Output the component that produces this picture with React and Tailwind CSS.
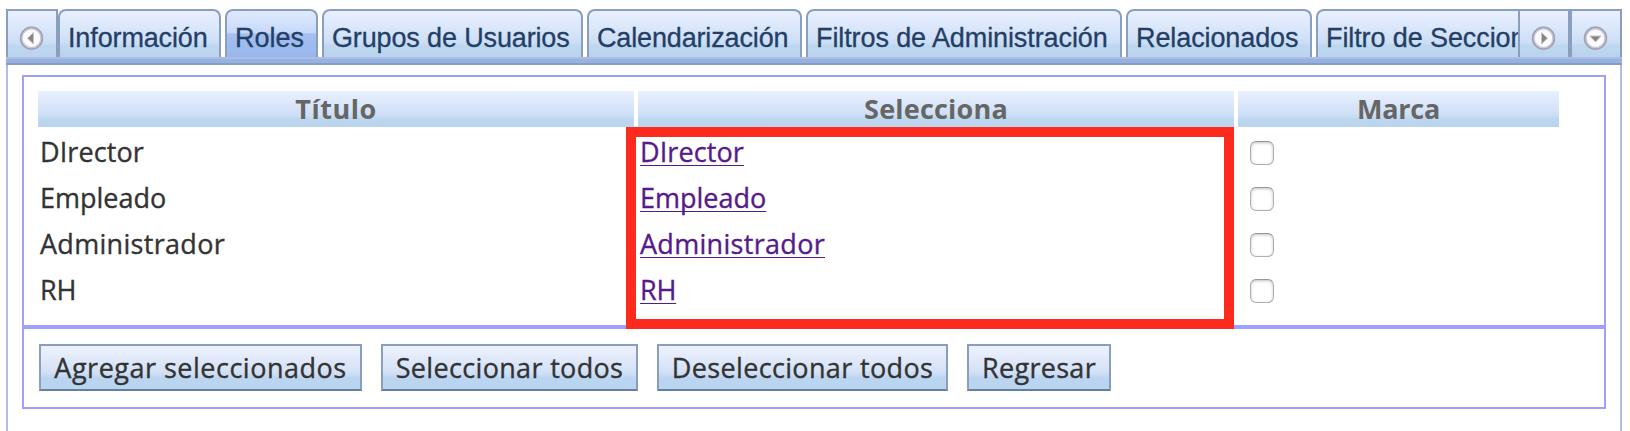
import React from 'react';

const tabs = [
  { label: 'Información', box: 'w-[163px] mr-[4px]', text: 'tracking-[-0.13px]' },
  { label: 'Roles', box: 'w-[93px] mr-[4px]', active: true, text: '' },
  { label: 'Grupos de Usuarios', box: 'w-[261px] mr-[4px]', text: 'tracking-[-0.14px]' },
  { label: 'Calendarización', box: 'w-[215px] mr-[4px]', text: 'tracking-[-0.15px]' },
  { label: 'Filtros de Administración', box: 'w-[316px] mr-[4px]', text: 'tracking-[-0.1px]' },
  { label: 'Relacionados', box: 'w-[186px] mr-[4px]', text: 'tracking-[-0.1px]' },
  { label: 'Filtro de Secciones', box: 'w-[260px]', text: 'tracking-[-0.1px]' },
];

const roles = [
  { name: 'DIrector', text: 'tracking-[0.1px]' },
  { name: 'Empleado', text: 'tracking-[0px]' },
  { name: 'Administrador', text: 'tracking-[0.3px]' },
  { name: 'RH', text: 'tracking-[-0.2px]' },
];

const actions = [
  { label: 'Agregar seleccionados', style: 'w-[323px] tracking-[0.5px]' },
  { label: 'Seleccionar todos', style: 'w-[257px] tracking-[0.33px]' },
  { label: 'Deseleccionar todos', style: 'w-[291px] tracking-[0.35px]' },
  { label: 'Regresar', style: 'w-[144px] tracking-[0.3px]' },
];

const panelGradient =
  'bg-[linear-gradient(180deg,#e9f0ff_0%,#d3e2f8_55%,#cbdef5_69%,#bfd8f0_75%,#b9d4ee_100%)]';
const activeGradient =
  'bg-[linear-gradient(180deg,#dfeafc_0%,#c7d9fa_47%,#a5c0f0_50%,#97b7ed_100%)]';

function ScrollButton({ direction }) {
  const points = {
    left: '15.5,8.5 15.5,20 9.5,14.2',
    right: '11.5,8.5 11.5,20 17.5,14.2',
    down: '7.8,12 19.2,12 13.5,18',
  };
  return (
    <button
      type="button"
      aria-label={direction}
      className={`flex h-[48px] w-[52px] shrink-0 justify-center border-x-2 border-t-2 border-[#8a9fbf] pt-[13px] ${panelGradient}`}
    >
      <svg width="28" height="28" viewBox="0 0 28 28">
        <circle cx="13.5" cy="14.2" r="10.3" fill="#fbfbfd" stroke="#c9cad6" strokeWidth="3.2" />
        <circle cx="13.5" cy="14.2" r="10.9" fill="none" stroke="#a0a2b5" strokeWidth="1.5" />
        <polygon points={points[direction]} fill="#858588" stroke="#c4c4c7" strokeWidth="1" />
      </svg>
    </button>
  );
}

function Tab({ label, active, box, text }) {
  return (
    <div
      className={`h-[48px] shrink-0 overflow-hidden whitespace-nowrap rounded-t-[8px] border-x-2 border-t-2 border-[#8a9fbf] pl-[8px] pt-[12px] font-['Liberation_Sans',sans-serif] text-[27px] leading-[30px] text-[#243e66] [-webkit-text-stroke:0.3px] ${box} ${text} ${active ? activeGradient : panelGradient}`}
    >
      {label}
    </div>
  );
}

function HeaderCell({ children, className }) {
  return (
    <div className={`h-[36px] text-center font-bold leading-[36px] text-[#666666] ${panelGradient} ${className}`}>
      {children}
    </div>
  );
}

export default function App() {
  return (
    <div className="h-[431px] w-[1630px] overflow-hidden bg-white pl-[6px] pt-[9px] font-['Open_Sans','Noto_Sans',sans-serif] text-[27px] text-[#333333]">
      <div className="w-[1616px]">
        <div className="flex h-[48px]">
          <ScrollButton direction="left" />
          <div className="flex w-[1460px] overflow-hidden">
            {tabs.map((t) => (
              <Tab key={t.label} {...t} />
            ))}
          </div>
          <ScrollButton direction="right" />
          <ScrollButton direction="down" />
        </div>
        <div className="h-[8px] border-b-2 border-t-2 border-b-[#869dbd] border-t-[#b0bbe2] bg-[#94b2e6]" />
        <div className="h-[366px] border-x-2 border-[#b2bce3] px-[14px] pt-[10px]">
          <section className="relative h-[252px] border-2 border-[#9e9fff] pl-[14px] pt-[14px]">
            <div className="flex gap-[4px]">
              <HeaderCell className="w-[596px] tracking-[0.5px]">Título</HeaderCell>
              <HeaderCell className="w-[596px] tracking-[0.2px]">Selecciona</HeaderCell>
              <HeaderCell className="w-[321px] tracking-[-0.2px]">Marca</HeaderCell>
            </div>
            <div className="pt-[2px] [-webkit-text-stroke:0.35px]">
              {roles.map((r) => (
                <div key={r.name} className="flex h-[46px] leading-[45px]">
                  <div className={`w-[600px] pl-[2px] ${r.text}`}>{r.name}</div>
                  <div className={`w-[600px] pl-[2px] ${r.text}`}>
                    <a
                      href="#"
                      className="text-[#551a8b] underline decoration-1 underline-offset-[3px] [text-decoration-skip-ink:none]"
                    >
                      {r.name}
                    </a>
                  </div>
                  <div className="pl-[12px] pt-[12px]">
                    <input
                      type="checkbox"
                      aria-label={r.name}
                      className="block size-[24px] appearance-none rounded-[6px] border border-[#b0b0b0] border-t-[#989898] bg-white shadow-[inset_0_1px_3px_rgba(0,0,0,0.25)]"
                    />
                  </div>
                </div>
              ))}
            </div>
            <div className="pointer-events-none absolute left-[602px] top-[50px] h-[202px] w-[608px] border-[10px] border-[#fd2a1e]" />
          </section>
          <section className="flex h-[82px] gap-[19px] border-2 border-[#9e9fff] pl-[15px] pt-[15px]">
            {actions.map((a) => (
              <button
                key={a.label}
                type="button"
                className={`h-[47px] shrink-0 whitespace-nowrap border-2 border-[#8a9fbf] border-b-[#667f9f] text-center leading-[43px] [-webkit-text-stroke:0.35px] bg-[linear-gradient(180deg,#eef2fe_0%,#d3e1f6_60%,#cbdcf4_66%,#bbd5f1_74%,#b9d5f0_100%)] ${a.style}`}
              >
                {a.label}
              </button>
            ))}
          </section>
        </div>
      </div>
    </div>
  );
}
